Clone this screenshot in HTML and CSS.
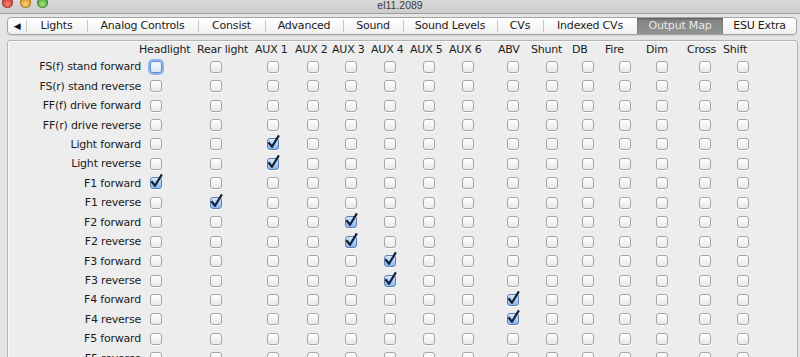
FILE: index.html
```html
<!DOCTYPE html>
<html lang="en">
  <head>
    <meta charset="UTF-8" />
    <meta name="viewport" content="width=device-width, initial-scale=1" />
    <title>el11.2089</title>
    <link rel="stylesheet" href="styles.css">
  </head>

  <body>
    <div class="titlebar">
      <div class="lights">
        <span class="light close"></span>
        <span class="light minimize"></span>
        <span class="light zoom"></span>
      </div>
      <div class="title">el11.2089</div>
      <div></div>
    </div>

    <div class="tabs">
      <div class="tab tab-arrow">◀</div>
      <div class="tab">Lights</div>
      <div class="tab">Analog Controls</div>
      <div class="tab">Consist</div>
      <div class="tab">Advanced</div>
      <div class="tab">Sound</div>
      <div class="tab">Sound Levels</div>
      <div class="tab">CVs</div>
      <div class="tab">Indexed CVs</div>
      <div class="tab selected">Output Map</div>
      <div class="tab after-selected">ESU Extra</div>
    </div>

    <div class="panel">
      <div class="map-header">
        <span></span>
        <span>Headlight</span>
        <span>Rear light</span>
        <span>AUX 1</span>
        <span>AUX 2</span>
        <span>AUX 3</span>
        <span>AUX 4</span>
        <span>AUX 5</span>
        <span>AUX 6</span>
        <span>ABV</span>
        <span>Shunt</span>
        <span>DB</span>
        <span>Fire</span>
        <span>Dim</span>
        <span>Cross</span>
        <span>Shift</span>
      </div>
      <div class="map" id="map"></div>
    </div>

    <script>
      const outputCount = 15;

      // row label, then the output columns that are switched on
      const rows = [
        ["FS(f) stand forward", []],
        ["FS(r) stand reverse", []],
        ["FF(f) drive forward", []],
        ["FF(r) drive reverse", []],
        ["Light forward", [2]],
        ["Light reverse", [2]],
        ["F1 forward", [0]],
        ["F1 reverse", [1]],
        ["F2 forward", [4]],
        ["F2 reverse", [4]],
        ["F3 forward", [5]],
        ["F3 reverse", [5]],
        ["F4 forward", [8]],
        ["F4 reverse", [8]],
        ["F5 forward", []],
        ["F5 reverse", []],
      ];

      const tick =
        '<svg class="tick" viewBox="0 0 12 12"><path d="M1.4 4.2 L5 8.8 L11.9 -2.6" /></svg>';

      const map = document.getElementById("map");
      let html = "";
      rows.forEach(([label, on], r) => {
        html += `<div class="row-label">${label}</div>`;
        for (let c = 0; c < outputCount; c++) {
          let cls = "box";
          if (on.includes(c)) cls += " checked";
          if (r === 0 && c === 0) cls += " focused";
          html += `<span class="${cls}">${on.includes(c) ? tick : ""}</span>`;
        }
      });
      map.innerHTML = html;
    </script>
  </body>
</html>
```

FILE: styles.css
```css
html,
body {
  margin: 0;
  height: 100%;
  overflow: hidden;
}

body {
  background: #e5e5e5;
  font-family: "DejaVu Sans", Verdana, sans-serif;
  font-size: 11px;
  letter-spacing: -0.2px;
  color: #1c1c1c;
}

/* window title bar */

.titlebar {
  display: grid;
  grid-template-columns: 1fr auto 1fr;
  height: 13px;
  background: linear-gradient(#d9d9d9, #cdcdcd);
  border-bottom: 1px solid #9c9c9c;
  overflow: hidden;
}

.lights {
  display: flex;
  gap: 6.5px;
  padding-left: 2px;
  margin-top: -3px;
}

.light {
  width: 11px;
  height: 11px;
  border-radius: 50%;
  box-shadow: inset 0 0 0 1px rgba(0, 0, 0, 0.28);
}

.close {
  background: radial-gradient(circle at 50% 65%, #f7857c, #d1362f 70%);
}

.minimize {
  background: radial-gradient(circle at 50% 65%, #fbd476, #d9931a 70%);
}

.zoom {
  background: radial-gradient(circle at 50% 65%, #a4e27f, #4aa33a 70%);
}

.title {
  font-family: "Liberation Sans", Arial, sans-serif;
  font-size: 10.5px;
  letter-spacing: 0;
  line-height: 11px;
  color: #3c3c3c;
}

/* tab strip */

.tabs {
  display: grid;
  grid-template-columns: 18px 61px 111px 67px 78px 60px 94px 46px 94px 86px 1fr;
  height: 16px;
  margin: 3px 3px 0 7px;
  border: 1px solid #a4a4a4;
  border-radius: 4px;
  background: linear-gradient(#ffffff, #f0f0f0);
  box-shadow: 0 1px 1px rgba(0, 0, 0, 0.08);
  overflow: hidden;
}

.tab {
  text-align: center;
  line-height: 16px;
  white-space: nowrap;
  background: linear-gradient(#cacaca, #cacaca) left center / 1px 12px no-repeat;
}

.tab-arrow {
  background: none;
  font-size: 9px;
  color: #111;
}

.tab.selected {
  background: linear-gradient(#838383, #939393);
  color: #e6e6e6;
  box-shadow: inset 0 1px 2px rgba(0, 0, 0, 0.35);
}

.tab.after-selected {
  background: none;
}

/* output map panel */

.panel {
  margin: 5px 2px 0 7px;
  height: 400px;
  border: 1px solid #b3b3b3;
  border-radius: 3px 3px 0 0;
  background: #ededed;
  box-shadow: inset 1px 1px 0 #f9f9f9;
}

.map-header {
  display: grid;
  grid-template-columns: 131px 58px 58px 40px 37px 39px 39px 39px 49px 33px 41px 33px 41px 41px 36px 1fr;
  height: 16px;
  line-height: 18px;
  white-space: nowrap;
}

.map {
  display: grid;
  grid-template-columns: 142px 60px 57px 40px 38px 39px 39px 39px 45px 39px 36px 37px 37px 43px 38px 1fr;
  grid-auto-rows: 19.45px;
  align-items: center;
}

.row-label {
  text-align: right;
  padding-right: 9px;
  white-space: nowrap;
}

.box {
  display: block;
  width: 12px;
  height: 12px;
  box-sizing: border-box;
  border: 1px solid #a5a5a5;
  border-radius: 3px;
  background: linear-gradient(#ffffff, #e9e9e9);
  box-shadow: 0 1px 0 rgba(255, 255, 255, 0.8);
}

.box.checked {
  border-color: #5f7fae;
  background: linear-gradient(#d7e8fb, #86b8ef);
}

.box.focused {
  border-color: #5d8fd6;
  background: linear-gradient(#f6f9fd, #dde8f6);
  box-shadow: 0 0 0 2px rgba(110, 160, 230, 0.75);
}

.tick {
  display: block;
  width: 12px;
  height: 12px;
  margin: -1px;
  overflow: visible;
}

.tick path {
  fill: none;
  stroke: #15203a;
  stroke-width: 2.2;
  stroke-linejoin: round;
}
```
